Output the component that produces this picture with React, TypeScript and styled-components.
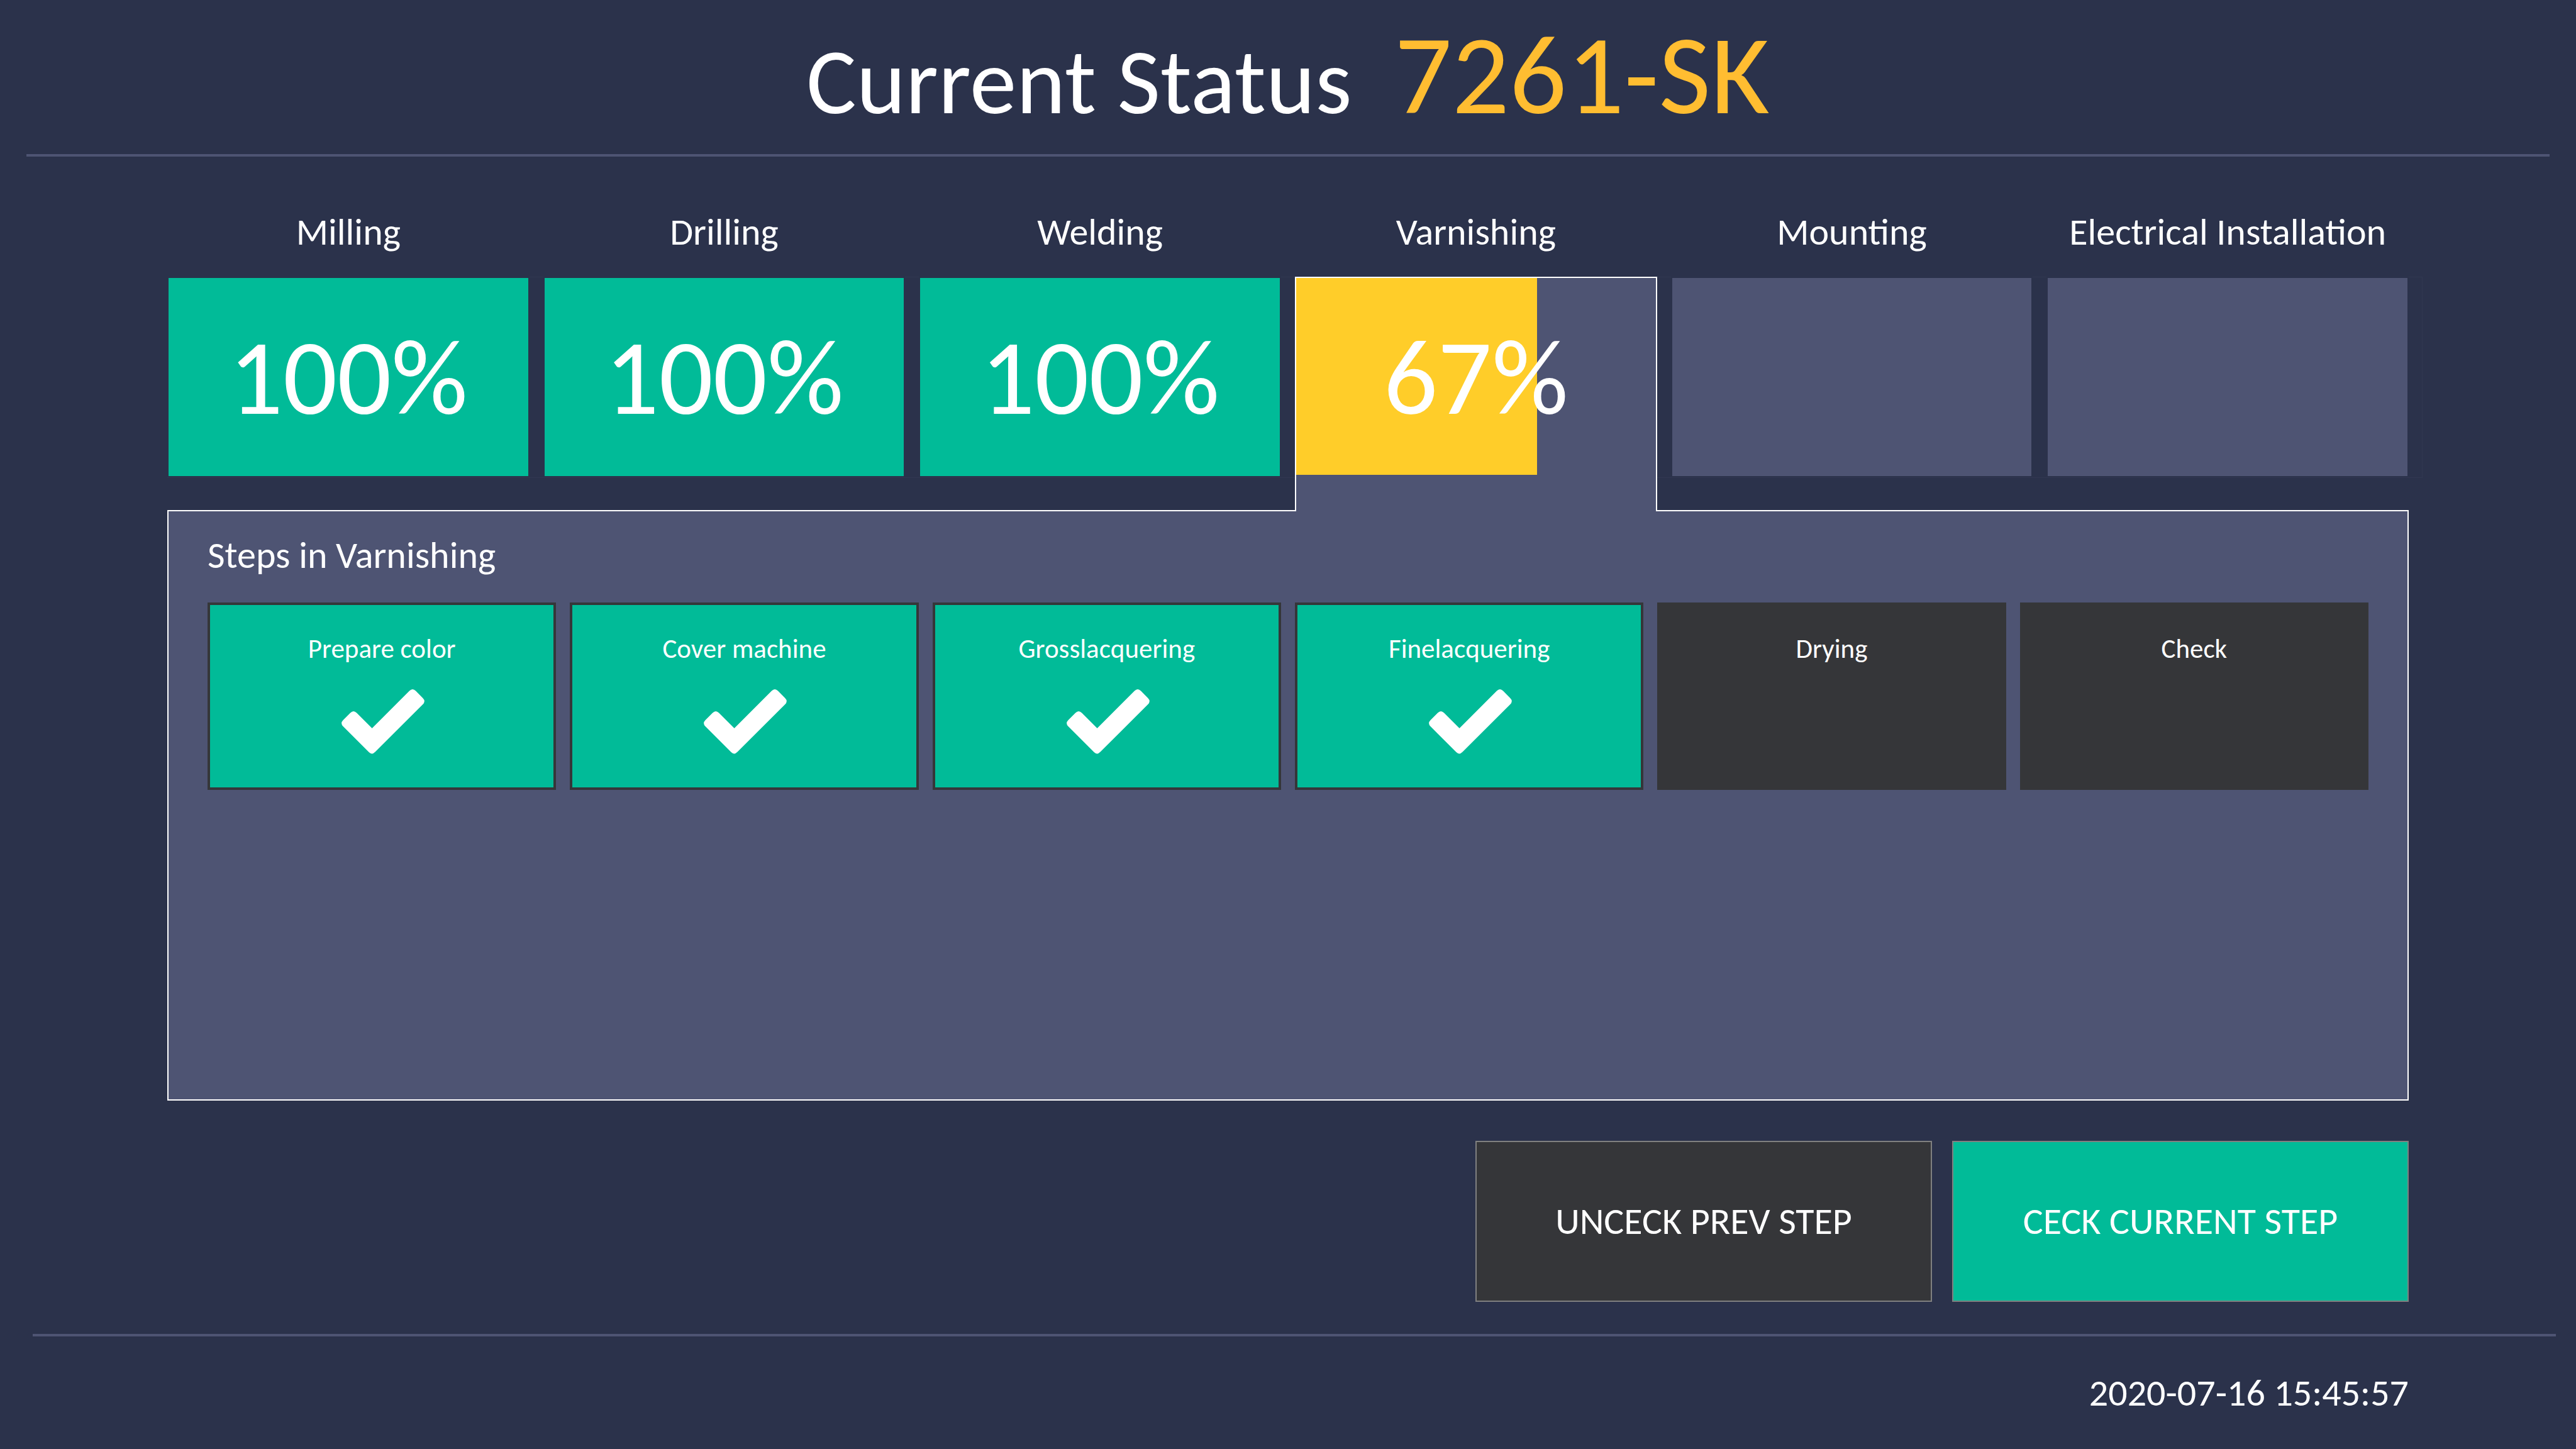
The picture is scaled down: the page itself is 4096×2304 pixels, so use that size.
import React from 'react';
import styled, { createGlobalStyle } from 'styled-components';

const color = {
  page: '#2b324b',
  slate: '#4e5473',
  frame: '#313751',
  green: '#01bb98',
  yellow: '#ffcd29',
  amber: '#ffbd31',
  dark: '#353639',
  grey: '#808080',
  white: '#ffffff',
};

const GlobalStyle = createGlobalStyle`
  *, *::before, *::after { box-sizing: border-box; }
  body {
    margin: 0;
    background: ${color.page};
    color: ${color.white};
    font-family: Calibri, Carlito, Lato, sans-serif;
  }
`;

const Page = styled.div`
  display: flex;
  flex-direction: column;
  min-height: 100vh;
`;

const Header = styled.header`
  display: flex;
  justify-content: center;
  align-items: baseline;
  gap: 68px;
  margin: 0 42px;
  padding: 9px 0 16px;
  border-bottom: 4px solid ${color.slate};
`;

const Title = styled.h1`
  margin: 0;
  font-size: 149px;
  line-height: 180px;
  font-weight: 400;
`;

const MachineCode = styled.span`
  color: ${color.amber};
  font-size: 180px;
  line-height: 220px;
`;

const Main = styled.main`
  flex: 1;
  display: flex;
  flex-direction: column;
  padding: 83px 266px 51px;
`;

const StageList = styled.ol`
  display: grid;
  grid-template-columns: repeat(6, minmax(0, 1fr));
  margin: 0 -22px 0 0;
  padding: 0;
  list-style: none;
`;

const StageItem = styled.li`
  display: flex;
  flex-direction: column;
  gap: 34px;
`;

const StageLabel = styled.h2`
  margin: 0;
  padding-right: 22px;
  font-size: 60px;
  line-height: 74px;
  font-weight: 400;
  text-align: center;
  white-space: nowrap;
`;

const StageSlot = styled.div`
  height: 320px;
  padding-right: 22px;
  box-shadow: inset 0 1px ${color.frame}, inset 0 -1px ${color.frame};

  ${StageItem}:last-child & {
    box-shadow: inset 0 1px ${color.frame}, inset 0 -1px ${color.frame}, inset -1px 0 ${color.frame};
  }
`;

const StageTile = styled.div<{ $active: boolean }>`
  position: relative;
  height: ${(p) => (p.$active ? 373 : 319)}px;
  border: 2px solid ${(p) => (p.$active ? color.white : color.page)};
  border-bottom-width: ${(p) => (p.$active ? 0 : 2)}px;
  background: ${color.slate};
  z-index: ${(p) => (p.$active ? 1 : 0)};
`;

const Meter = styled.div`
  display: grid;
  grid-template-columns: minmax(0, 1fr);
  height: 315px;
`;

const MeterFill = styled.div<{ $active: boolean }>`
  grid-area: 1 / 1;
  margin-bottom: ${(p) => (p.$active ? 2 : 0)}px;
  background: ${(p) => (p.$active ? color.yellow : color.green)};
`;

const MeterValue = styled.span`
  grid-area: 1 / 1;
  place-self: center;
  font-size: 170px;
  line-height: 208px;
`;

const StepsPanel = styled.section`
  flex: 1;
  margin-top: 51px;
  padding: 33px 62px;
  border: 2px solid ${color.white};
  background: ${color.slate};
`;

const StepsTitle = styled.h2`
  margin: 0 0 38px;
  font-size: 60px;
  line-height: 74px;
  font-weight: 400;
`;

const StepList = styled.ol`
  display: grid;
  grid-template-columns: repeat(6, minmax(0, 1fr));
  gap: 22px;
  margin: 0;
  padding: 0;
  list-style: none;
`;

const StepCard = styled.li<{ $done: boolean }>`
  display: flex;
  flex-direction: column;
  align-items: center;
  gap: 38px;
  height: 298px;
  padding-top: 44px;
  border: 4px solid ${color.dark};
  background: ${(p) => (p.$done ? color.green : color.dark)};
  font-size: 43px;
  line-height: 52px;
`;

const CheckIcon = styled.svg`
  width: 136px;
  height: 103px;
  fill: ${color.white};
`;

const Actions = styled.div`
  display: flex;
  justify-content: flex-end;
  gap: 32px;
  margin-top: 64px;
`;

const ActionButton = styled.button<{ $primary?: boolean }>`
  width: 726px;
  height: 256px;
  padding: 0;
  border: 2px solid ${color.grey};
  border-radius: 0;
  background: ${(p) => (p.$primary ? color.green : color.dark)};
  color: inherit;
  font-family: inherit;
  font-size: 60px;
  line-height: 74px;
  cursor: pointer;
`;

const Footer = styled.footer`
  margin: 0 32px 0 52px;
  padding: 53px 234px 52px 0;
  border-top: 4px solid ${color.slate};
  font-size: 60px;
  line-height: 74px;
  text-align: right;
`;

type Stage = { name: string; percent?: number };
type Step = { name: string; done: boolean };

const stages: Stage[] = [
  { name: 'Milling', percent: 100 },
  { name: 'Drilling', percent: 100 },
  { name: 'Welding', percent: 100 },
  { name: 'Varnishing', percent: 67 },
  { name: 'Mounting' },
  { name: 'Electrical Installation' },
];

const steps: Step[] = [
  { name: 'Prepare color', done: true },
  { name: 'Cover machine', done: true },
  { name: 'Grosslacquering', done: true },
  { name: 'Finelacquering', done: true },
  { name: 'Drying', done: false },
  { name: 'Check', done: false },
];

function StageView({ name, percent }: Stage) {
  const active = percent !== undefined && percent < 100;
  return (
    <StageItem>
      <StageLabel>{name}</StageLabel>
      <StageSlot>
        <StageTile $active={active}>
          {percent !== undefined && (
            <Meter>
              <MeterFill $active={active} style={{ width: `${percent}%` }} />
              <MeterValue>{percent}%</MeterValue>
            </Meter>
          )}
        </StageTile>
      </StageSlot>
    </StageItem>
  );
}

function Check() {
  return (
    <CheckIcon viewBox="-4 0 136 103" aria-hidden="true">
      <path d="M48.6 62L108 2.6Q113 -2.4 118 2.6L129.3 13.9Q134.3 18.9 129.3 23.9L53.6 99.6Q48.6 105 43.6 100L2.6 59Q-2.4 54 2.6 49L14.1 37.5Q19.1 32.5 24.1 37.5Z" />
    </CheckIcon>
  );
}

export default function App() {
  return (
    <Page>
      <GlobalStyle />
      <Header>
        <Title>Current Status</Title>
        <MachineCode>7261-SK</MachineCode>
      </Header>
      <Main>
        <StageList>
          {stages.map((stage) => (
            <StageView key={stage.name} {...stage} />
          ))}
        </StageList>
        <StepsPanel>
          <StepsTitle>Steps in Varnishing</StepsTitle>
          <StepList>
            {steps.map((step) => (
              <StepCard key={step.name} $done={step.done}>
                {step.name}
                {step.done && <Check />}
              </StepCard>
            ))}
          </StepList>
        </StepsPanel>
        <Actions>
          <ActionButton type="button">UNCECK PREV STEP</ActionButton>
          <ActionButton type="button" $primary>
            CECK CURRENT STEP
          </ActionButton>
        </Actions>
      </Main>
      <Footer>
        <time dateTime="2020-07-16T15:45:57">2020-07-16 15:45:57</time>
      </Footer>
    </Page>
  );
}
